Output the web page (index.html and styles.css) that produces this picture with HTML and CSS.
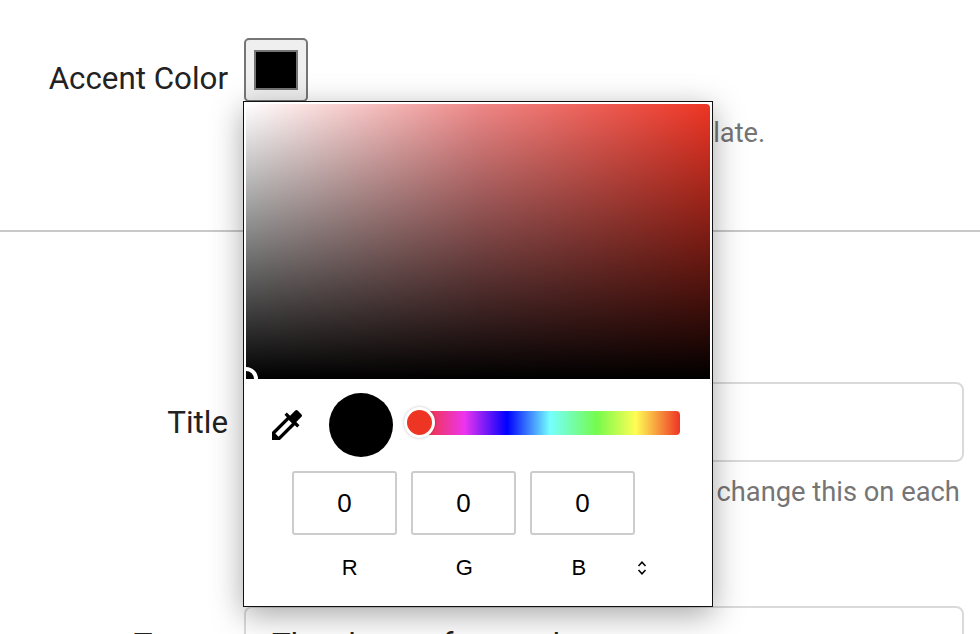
FILE: index.html
```html
<!DOCTYPE html>
<html lang="en">
<head>
    <meta charset="UTF-8" />
    <title>Page Settings</title>
    <link rel="stylesheet" href="styles.css">
</head>
<body>
<section class="accent-section">
    <div class="row">
        <label class="row-label">Accent Color</label>
        <div class="row-body picker-anchor">
            <button class="swatch-btn"><span class="swatch"></span></button>
            <div class="popup">
                <div class="sat-box"><span class="sat-handle"></span></div>
                <div class="controls">
                    <div class="top-controls">
                        <svg class="dropper" viewBox="0 0 24 24" width="40" height="40">
                            <path d="M20.71 5.63l-2.34-2.34a1 1 0 0 0-1.41 0l-3.12 3.12-1.93-1.91-1.41 1.41 1.42 1.42L3 16.25V21h4.75l8.92-8.92 1.42 1.42 1.41-1.41-1.92-1.92 3.12-3.12a1 1 0 0 0 .01-1.42zM6.92 19L5 17.08l8.06-8.06 1.92 1.92L6.92 19z"/>
                        </svg>
                        <span class="preview"></span>
                        <div class="hue-bar"><span class="hue-handle"></span></div>
                    </div>
                    <div class="rgb-fields">
                        <input class="rgb-input" value="0">
                        <input class="rgb-input" value="0">
                        <input class="rgb-input" value="0">
                    </div>
                    <div class="rgb-labels">
                        <span class="rgb-label">R</span>
                        <span class="rgb-label">G</span>
                        <span class="rgb-label">B</span>
                        <svg class="toggle" viewBox="0 0 10 16" width="10" height="16">
                            <path d="M1.500 6L5 2.200 8.500 6M1.500 10L5 13.800 8.500 10" fill="none" stroke="#000" stroke-width="1.500"/>
                        </svg>
                    </div>
                </div>
            </div>
            <p class="help help-accent">Used as the accent color for your template.</p>
        </div>
    </div>
</section>
<section class="fields-section">
    <div class="row">
        <label class="row-label">Title</label>
        <div class="row-body">
            <input class="text-input" type="text">
            <p class="help">Enter the main page title here. You can change this on each page.</p>
        </div>
    </div>
    <div class="row teaser-row">
        <label class="row-label">Teaser</label>
        <div class="row-body">
            <div class="text-input teaser">The shape of your wheat</div>
        </div>
    </div>
</section>
</body>
</html>
```

FILE: styles.css
```css
html, body {
    margin: 0;
    height: 634px;
    overflow: hidden;
}
body {
    background: #fff;
    font-family: 'Roboto', sans-serif;
    color: #222;
}
.accent-section {
    height: 232px;
    box-sizing: border-box;
    padding-top: 38px;
    border-bottom: 2px solid #c8c8c8;
}
.fields-section {
    padding-top: 150px;
}
.row {
    display: grid;
    grid-template-columns: 228px 1fr;
    column-gap: 16px;
}
.row-label {
    text-align: right;
    font-size: 31.300px;
    line-height: 82px;
}
.row-body {
    min-width: 0;
}
.picker-anchor {
    position: relative;
}
.swatch-btn {
    display: block;
    width: 64px;
    height: 64px;
    padding: 0;
    box-sizing: border-box;
    background: #efefef;
    border: 2px solid #767676;
    border-radius: 5px;
}
.swatch {
    display: block;
    width: 44px;
    height: 40px;
    margin: 0 auto;
    box-sizing: border-box;
    background: #000;
    border: 2px solid #767676;
}
.help {
    width: 730px;
    margin: 13px 0 0;
    color: #757575;
    font-size: 27.300px;
    line-height: 34px;
}
.help-accent {
    margin-top: 14px;
}
.text-input {
    display: block;
    width: 720px;
    height: 80px;
    box-sizing: border-box;
    border: 2px solid #dadada;
    border-radius: 8px;
    background: #fff;
}
.teaser-row {
    margin-top: 63px;
}
.teaser-row .row-label {
    line-height: 78px;
}
.teaser {
    font-size: 31.300px;
    line-height: 74px;
    padding: 0 26px;
}
.popup {
    position: absolute;
    left: -1px;
    top: 63px;
    z-index: 2;
    width: 470px;
    height: 506px;
    box-sizing: border-box;
    background: #fff;
    border: 1px solid #111;
    box-shadow: 0 8px 30px rgba(0, 0, 0, 0.35);
    font-family: 'Liberation Sans', Arial, sans-serif;
    color: #000;
}
.sat-box {
    position: relative;
    height: 275px;
    margin: 2px 2px 0;
    overflow: hidden;
    border-radius: 4px 4px 0 0;
    background:
        linear-gradient(to top, #000, rgba(0, 0, 0, 0)),
        linear-gradient(to right, #fff, #e88 50%, #ee3524);
}
.sat-handle {
    position: absolute;
    left: -12px;
    bottom: -12px;
    width: 16px;
    height: 16px;
    border: 4px solid #fff;
    border-radius: 50%;
}
.controls {
    padding: 14px 32px 0 23px;
}
.top-controls {
    display: flex;
    align-items: center;
}
.dropper {
    flex: none;
    margin-right: 22px;
}
.preview {
    flex: none;
    width: 64px;
    height: 64px;
    border-radius: 50%;
    background: #000;
}
.hue-bar {
    position: relative;
    flex: 1;
    height: 24px;
    margin: 0 0 4px 27px;
    border-radius: 0 4px 4px 0;
    background: linear-gradient(to right, #ee3524 0%, #ee35ee 17%, #0000ff 33.500%, #75ffff 50%, #75fb4c 68%, #fffd55 83%, #ee3524 100%);
}
.hue-handle {
    position: absolute;
    left: -16px;
    top: -4px;
    width: 25px;
    height: 25px;
    border: 3px solid #fff;
    border-radius: 50%;
    background: #ee3524;
    box-shadow: 0 0 3px rgba(0, 0, 0, 0.25);
}
.rgb-fields {
    display: flex;
    gap: 14px;
    margin: 14px 0 0 25px;
}
.rgb-input {
    width: 105px;
    height: 64px;
    box-sizing: border-box;
    padding: 0;
    border: 2px solid #ccc;
    border-radius: 3px;
    text-align: center;
    font-family: inherit;
    font-size: 26px;
    color: #000;
}
.rgb-labels {
    display: grid;
    grid-template-columns: repeat(3, 114.500px) 10px;
    align-items: center;
    margin: 19px 0 0 25.500px;
}
.rgb-label {
    text-align: center;
    font-size: 22px;
    line-height: 28px;
}
.toggle {
    margin-left: 1px;
}
```
